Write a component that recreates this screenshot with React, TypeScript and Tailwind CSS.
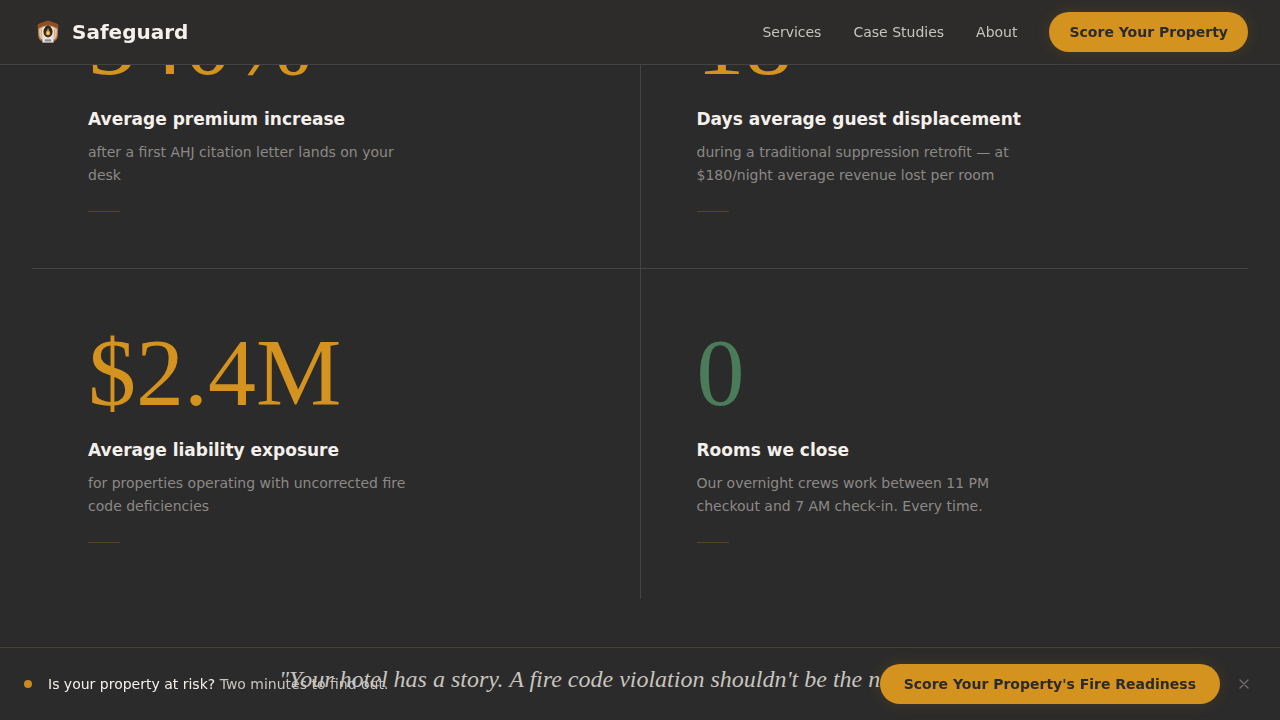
import React from "react";

type Stat = {
  value: string;
  title: string;
  text: string;
  tone: string;
};

const stats: Stat[] = [
  {
    value: "340%",
    title: "Average premium increase",
    text: "after a first AHJ citation letter lands on your desk",
    tone: "text-[#d4921e]",
  },
  {
    value: "18",
    title: "Days average guest displacement",
    text: "during a traditional suppression retrofit — at $180/night average revenue lost per room",
    tone: "text-[#d4921e]",
  },
  {
    value: "$2.4M",
    title: "Average liability exposure",
    text: "for properties operating with uncorrected fire code deficiencies",
    tone: "text-[#d4921e]",
  },
  {
    value: "0",
    title: "Rooms we close",
    text: "Our overnight crews work between 11 PM checkout and 7 AM check-in. Every time.",
    tone: "text-[#4a7c59]",
  },
];

function Logo() {
  return (
    <svg viewBox="0 0 32 32" className="size-8" aria-hidden="true">
      <path d="M5.800 9.500 Q6 8 8 7.500 L16 4.800 L24 7.500 Q26 8 26.200 9.500 L25.800 20 Q25.500 23.500 21.500 25.500 L20.500 26.500 H11.500 L10.500 25.500 Q6.500 23.500 6.200 20 Z" fill="#b9793f" />
      <path d="M7.200 13 L12 10.500 H20 L24.800 13 L24.500 19.500 Q24.300 22 21 24 H11 Q7.700 22 7.500 19.500 Z" fill="#ead6c2" />
      <path d="M5.800 12.500 V9.500 Q6 8 8 7.500 L16 4.800 L24 7.500 Q26 8 26.200 9.500 V12.500 L21 10 L16 8.800 L11 10 Z" fill="#8f4f22" />
      <path d="M9.200 13 V21.500 M22.800 13 V21.500" stroke="#b98a63" strokeWidth="0.8" />
      <ellipse cx="16" cy="15.800" rx="5.600" ry="6.400" fill="#f5efe8" />
      <path d="M16 9 Q20.600 11.500 20.600 15.800 Q20.600 20.500 16 21.400 Q11.400 20.500 11.400 15.800 Q11.400 11.500 16 9 Z" fill="#292724" />
      <path d="M16 11.500 Q16.500 14 18 15.800 Q19.300 19 16 19.600 Q12.700 19 14 15.800 Q15.800 14 16 11.500 Z" fill="#dc9120" />
      <path d="M16 15 Q17.800 18 16 18.800 Q14.200 18 16 15 Z" fill="#ffe08a" />
      <path d="M10.200 26.500 L11.500 21.800 Q16 23 20.500 21.800 L21.800 26.500 Z" fill="#e6e6ea" />
      <path d="M12.500 25.400 L13.300 23.300 H18.700 L19.500 25.400 Z" fill="#8b8b92" />
    </svg>
  );
}

export default function App() {
  return (
    <div className="min-h-screen overflow-hidden bg-[#2b2b2b] font-['DejaVu_Sans',sans-serif] text-[#f5f0eb]">
      <header className="fixed inset-x-0 top-0 z-20 flex h-[65px] items-center justify-between border-b border-[#434343] bg-[#2d2c2a] px-8">
        <a href="#top" className="flex items-center gap-2 text-xl font-bold">
          <Logo />
          Safeguard
        </a>
        <nav className="flex items-center gap-8 text-sm text-[#c8c4bf]">
          <a href="#services">Services</a>
          <a href="#cases">Case Studies</a>
          <a href="#about">About</a>
          <a
            href="#score"
            className="flex h-10 items-center rounded-full bg-[#d4921e] px-5 font-bold text-[#2b2b2b] shadow-[0_0_16px_rgba(212,146,30,0.15)]"
          >
            Score Your Property
          </a>
        </nav>
      </header>

      <main className="-mt-[62px]">
        <section className="px-8">
          <div className="grid grid-cols-2 gap-px bg-[#434343]">
            {stats.map((s) => (
              <article key={s.title} className="bg-[#2b2b2b] p-14">
                <p className={`font-['Liberation_Serif',serif] text-8xl leading-none ${s.tone}`}>{s.value}</p>
                <h3 className="mt-4 text-[17px] leading-[27px] font-bold">{s.title}</h3>
                <p className="mt-2 max-w-80 text-sm leading-[23px] text-[#8c8986]">{s.text}</p>
                <div className="mt-6 h-px w-8 bg-[#524623]" />
              </article>
            ))}
          </div>
        </section>
        <blockquote className="pt-16 pb-6 text-center font-['Liberation_Serif',serif] text-2xl whitespace-nowrap text-[#c8c4bf] italic">
          "Your hotel has a story. A fire code violation shouldn't be the next chapter."
        </blockquote>
      </main>

      <aside className="fixed inset-x-0 bottom-0 z-20 flex items-center justify-between border-t border-[#4a4426] px-6 py-4">
        <div className="flex items-center gap-4 text-sm">
          <span className="size-2 rounded-full bg-[#c98a20]" />
          <p>
            Is your property at risk? <span className="text-[#c8c4bf]">Two minutes to find out.</span>
          </p>
        </div>
        <div className="flex items-center gap-3">
          <a
            href="#score"
            className="flex h-10 items-center rounded-full bg-[#d4921e] px-6 text-sm font-bold text-[#2b2b2b] shadow-[0_0_16px_rgba(212,146,30,0.15)]"
          >
            Score Your Property's Fire Readiness
          </a>
          <button type="button" aria-label="Dismiss" className="flex size-6 items-center justify-center text-[#757270]">
            <svg viewBox="0 0 16 16" className="size-4" fill="none" stroke="currentColor" strokeWidth="1.2" strokeLinecap="round">
              <path d="M4 4 12 12M12 4 4 12" />
            </svg>
          </button>
        </div>
      </aside>
    </div>
  );
}
